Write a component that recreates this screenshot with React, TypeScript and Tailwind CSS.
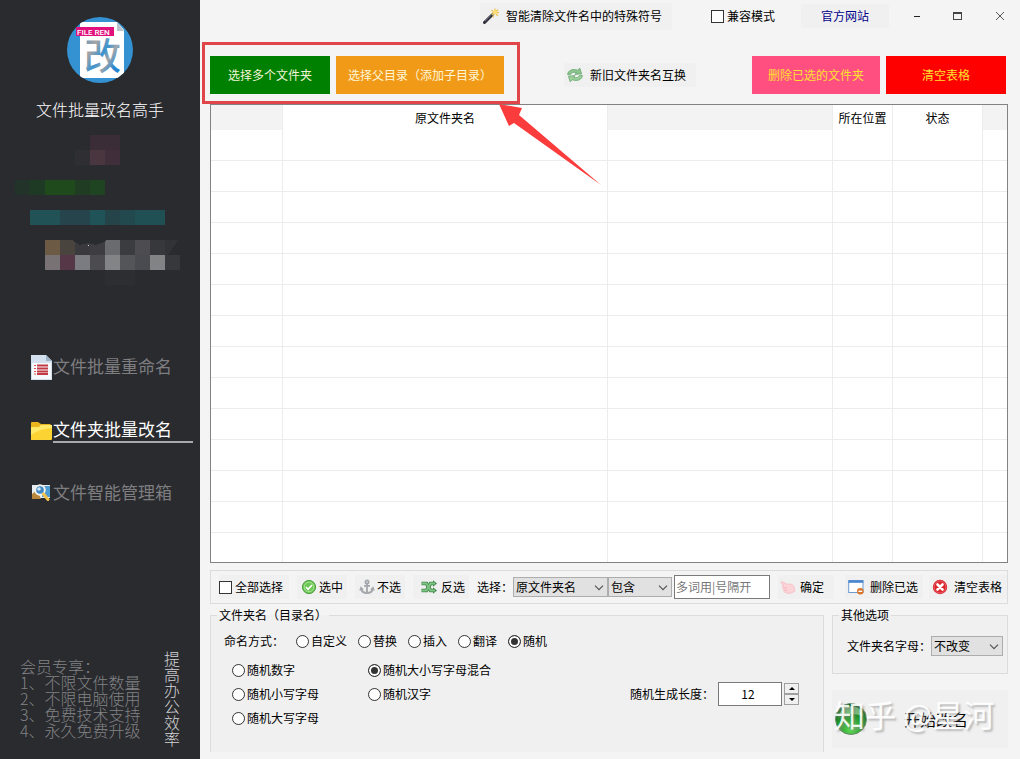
import type { ReactNode } from "react";
import { useState } from "react";

/* ---------- icons ---------- */

function LogoIcon() {
  return (
    <svg viewBox="0 0 66 66" className="size-[66px]" aria-hidden="true">
      <defs>
        <clipPath id="logo-clip">
          <circle cx="33" cy="33" r="33" />
        </clipPath>
        <linearGradient id="logo-ink" x1="0" y1="0" x2="1" y2="1">
          <stop offset="0" stopColor="#2f8fd0" />
          <stop offset="0.3" stopColor="#a9a5a3" />
          <stop offset="0.5" stopColor="#3a93cf" />
          <stop offset="0.62" stopColor="#a3a8ad" />
          <stop offset="0.78" stopColor="#2a88d0" />
          <stop offset="1" stopColor="#1b7fd0" />
        </linearGradient>
      </defs>
      <g clipPath="url(#logo-clip)">
        <rect width="66" height="66" fill="#3492d3" />
        <path d="M13 5H50L57 13V61H13Z" fill="#fff" />
        <path d="M50 5V14H57Z" fill="#b9c3cc" />
        <rect x="9" y="10" width="38" height="9" fill="#e0107c" />
        <text
          x="10"
          y="17.500"
          fontSize="8"
          fontWeight="500"
          fill="#fff"
          fontFamily="Roboto, sans-serif"
        >
          FILE REN
        </text>
        <text
          x="17"
          y="53"
          fontSize="37"
          fontWeight="500"
          fill="url(#logo-ink)"
          fontFamily="Noto Sans CJK SC, sans-serif"
        >
          改
        </text>
      </g>
    </svg>
  );
}

function DocIcon() {
  return (
    <svg viewBox="0 0 21 25" className="h-[25px] w-[21px] shrink-0" aria-hidden="true">
      <path d="M0 0H15L21 6V25H0Z" fill="#d3e1ee" />
      <path d="M1 8H20V24H1Z" fill="#f6f9fc" />
      <path d="M15 0V6H21Z" fill="#9fb4c6" />
      <path d="M3 10.500H5M3 13.500H5M3 16.500H5M3 19H5" stroke="#e05050" strokeWidth="1.200" />
      <path d="M6 10.500H17M6 13.500H17M6 16.500H17M6 19H17" stroke="#c23a44" strokeWidth="1.800" />
    </svg>
  );
}

function FolderIcon() {
  return (
    <svg viewBox="0 0 21 25" className="h-[25px] w-[21px] shrink-0" aria-hidden="true">
      <path d="M0 5Q0 4 1 4H7L10 6H19Q20 6 20 8V22H0Z" fill="#e9b41c" />
      <path d="M0 9H8L10 7H21V21Q21 22 20 22H1Q0 22 0 21Z" fill="#fbd433" />
      <path d="M0 9H8L10 7H21V10Q8 11 0 17Z" fill="#fff07e" opacity="0.750" />
    </svg>
  );
}

function SearchBoxIcon() {
  return (
    <svg viewBox="0 0 21 25" className="h-[25px] w-[21px] shrink-0" aria-hidden="true">
      <path d="M1 4H19V17H1Z" fill="#e6eef5" />
      <path d="M11 5H19V16H11Z" fill="#4f9bd3" />
      <path d="M1 13L6 9L10 18H1Z" fill="#b8873b" />
      <circle cx="9" cy="9" r="4.800" fill="#3d87c4" stroke="#f1f1ea" strokeWidth="2" />
      <circle cx="8" cy="8" r="1.800" fill="#cfe6f8" />
      <path d="M12.500 13L17 18.500" stroke="#f2c14a" strokeWidth="3" strokeLinecap="round" />
    </svg>
  );
}

function WandIcon() {
  return (
    <svg viewBox="0 0 16 16" className="size-4 shrink-0" aria-hidden="true">
      <path d="M1.500 14.500L9 7" stroke="#2b2b33" strokeWidth="3" strokeLinecap="round" />
      <path d="M2 13.200L8.500 6.800" stroke="#8d8fa3" strokeWidth="0.800" />
      <path d="M9 7L11 5" stroke="#c9b36a" strokeWidth="3" />
      <path
        d="M12 0.500V3M8.500 2L10.500 4M15 1.500L13 3.500M13 6L15 8M12.500 4.500H16M10 8L10.500 9.500"
        stroke="#ecc65a"
        strokeWidth="1.300"
      />
      <circle cx="12" cy="4.200" r="2" fill="#ffdf6e" />
    </svg>
  );
}

function SwapIcon() {
  return (
    <svg viewBox="0 0 16 16" className="size-4 shrink-0" aria-hidden="true">
      <path
        d="M0.600 7.600C0.800 3.600 5.500 1.400 10.600 3.200L12.800 1.200L14.600 6.800L8 7.400L9.300 5.700C6.600 4.700 4.400 5.500 3.600 7.600Z"
        fill="#8cc58d"
        stroke="#5c9c64"
        strokeWidth="0.700"
        strokeLinejoin="round"
      />
      <path
        d="M15.400 8.400C15.200 12.400 10.500 14.600 5.400 12.800L3.200 14.800L1.400 9.200L8 8.600L6.700 10.300C9.400 11.300 11.600 10.500 12.400 8.400Z"
        fill="#9bd09a"
        stroke="#5c9c64"
        strokeWidth="0.700"
        strokeLinejoin="round"
      />
    </svg>
  );
}

function CheckIcon() {
  return (
    <svg viewBox="0 0 16 16" className="size-4 shrink-0" aria-hidden="true">
      <circle cx="8" cy="8" r="6.600" fill="#6cc653" stroke="#4d9f42" />
      <circle cx="8" cy="8" r="4.800" fill="none" stroke="#b9eba6" strokeWidth="0.800" />
      <path d="M5 8.200L7.200 10.300L11 6" stroke="#fff" strokeWidth="1.800" fill="none" />
    </svg>
  );
}

function AnchorIcon() {
  return (
    <svg
      viewBox="0 0 16 16"
      className="size-4 shrink-0"
      fill="none"
      stroke="#a3a7ab"
      strokeWidth="1.800"
      aria-hidden="true"
    >
      <circle cx="8" cy="3" r="1.600" />
      <path d="M8 4.600V14M5 6.800H11M2 9.500C2.500 12.500 5 14 8 14S13.500 12.500 14 9.500" />
      <path d="M0.800 11.500L2 8.500L4.200 11M15.200 11.500L14 8.500L11.800 11" strokeWidth="1.200" />
    </svg>
  );
}

function ShuffleIcon() {
  return (
    <svg viewBox="0 0 16 16" className="size-4 shrink-0" fill="none" aria-hidden="true">
      <g stroke="#3f8748" strokeWidth="3.600">
        <path d="M0.500 4.500H5.500L9.500 11.500H12.500" />
        <path d="M0.500 11.500H5.500L9.500 4.500H12.500" />
      </g>
      <path d="M12 1.200L16 4.500L12 7.800ZM12 8.200L16 11.500L12 14.800Z" fill="#3f8748" />
      <g stroke="#7fc485" strokeWidth="1.800">
        <path d="M1 4.500H5.500L9.500 11.500H14" />
        <path d="M1 11.500H5.500L9.500 4.500H14" />
      </g>
    </svg>
  );
}

function HandIcon() {
  return (
    <svg viewBox="0 0 16 16" className="size-4 shrink-0" aria-hidden="true">
      <path
        d="M1 3.500Q1 2 3 3L7.500 5.200L10 5Q13 5 14 7.500L15 12Q12 14.500 8 14.500L4.500 13Q3 12.500 4 11.400L2.800 10.200Q2.200 9.200 3.500 8.800L2 7.600Q2 6.500 4 6.500L1.400 4.500Z"
        fill="#fcd3d7"
        stroke="#f4b9c0"
        strokeWidth="0.700"
      />
      <path d="M4 8.800L7 9M4.300 11.200L7 11.300" stroke="#f0a9b2" strokeWidth="0.700" />
    </svg>
  );
}

function WindowRemoveIcon() {
  return (
    <svg viewBox="0 0 16 16" className="size-4 shrink-0" aria-hidden="true">
      <rect x="0.700" y="1.700" width="14.300" height="11.800" fill="#fff" stroke="#6d9bd0" />
      <rect x="0.500" y="1.200" width="14.800" height="2.600" fill="#4a86cf" />
      <circle cx="12.300" cy="12.300" r="3.300" fill="#d9742e" />
      <path d="M10.400 12.300H14.200" stroke="#fff" strokeWidth="1.400" />
    </svg>
  );
}

function ErrorIcon() {
  return (
    <svg viewBox="0 0 16 16" className="size-4 shrink-0" aria-hidden="true">
      <circle cx="8" cy="8" r="7.200" fill="#d9262f" />
      <circle cx="8" cy="8" r="6" fill="none" stroke="#ee6a70" strokeWidth="0.800" />
      <path d="M5.500 5.500L10.500 10.500M10.500 5.500L5.500 10.500" stroke="#fff" strokeWidth="2.600" strokeLinecap="round" />
    </svg>
  );
}

function StartIcon() {
  return (
    <svg viewBox="0 0 32 32" className="size-8 shrink-0" aria-hidden="true">
      <defs>
        <radialGradient id="start-ball" cx="0.500" cy="0.850" r="0.850">
          <stop offset="0" stopColor="#5fd957" />
          <stop offset="0.500" stopColor="#249a28" />
          <stop offset="1" stopColor="#0b5a14" />
        </radialGradient>
      </defs>
      <circle cx="16" cy="16" r="15.500" fill="url(#start-ball)" stroke="#6b8a6c" />
      <path d="M4 13Q6 3 16 3T28 13Q16 9 4 13Z" fill="#d3f3cf" opacity="0.500" />
    </svg>
  );
}

/* ---------- sidebar ---------- */

type Cell = [x: number, y: number, w: number, h: number, fill: string];

const MOSAIC: Cell[] = [
  [75, 15, 15, 15, "#2f2e33"],
  [90, 0, 30, 15, "#3a2d37"],
  [90, 15, 15, 15, "#49363f"],
  [105, 15, 15, 15, "#402f3a"],
  [15, 45, 15, 15, "#22332a"],
  [30, 45, 15, 15, "#1f3a24"],
  [45, 45, 30, 15, "#1e4a1c"],
  [75, 45, 15, 15, "#203d24"],
  [90, 45, 15, 15, "#1f4421"],
  [30, 75, 30, 15, "#215256"],
  [60, 75, 30, 15, "#25444b"],
  [90, 75, 15, 15, "#205357"],
  [105, 75, 15, 15, "#25444a"],
  [120, 75, 15, 15, "#22494e"],
  [135, 75, 30, 15, "#205053"],
  [45, 105, 15, 15, "#6d5a45"],
  [60, 105, 15, 15, "#4a443e"],
  [75, 105, 15, 15, "#3a3a3e"],
  [90, 105, 15, 15, "#3e3e42"],
  [105, 105, 15, 15, "#6a6b6e"],
  [120, 105, 15, 15, "#3b3c40"],
  [135, 105, 15, 15, "#4c4c51"],
  [150, 105, 15, 15, "#37383c"],
  [45, 120, 15, 15, "#787275"],
  [60, 120, 15, 15, "#553748"],
  [75, 120, 15, 15, "#7b7c81"],
  [90, 120, 15, 15, "#4b4b50"],
  [105, 120, 15, 15, "#838486"],
  [120, 120, 15, 15, "#545559"],
  [135, 120, 15, 15, "#4a4b50"],
  [150, 120, 15, 15, "#828384"],
  [165, 120, 15, 15, "#37383c"],
  [105, 135, 30, 15, "#2d2e32"],
];

function Mosaic() {
  return (
    <svg
      viewBox="0 0 200 150"
      className="h-[150px] w-[200px]"
      shapeRendering="crispEdges"
      aria-hidden="true"
    >
      {MOSAIC.map(([x, y, w, h, fill]) => (
        <rect key={`${x}-${y}`} x={x} y={y} width={w} height={h} fill={fill} />
      ))}
      <path d="M165 105H178L168 120H165Z" fill="#323337" />
      <path d="M72 105H106L104 107L96 110L88 108L80 110Z" fill="#2a2b2f" />
      <rect x="88" y="110" width="1" height="1" fill="#d0d0d0" />
    </svg>
  );
}

type NavItemProps = {
  icon: ReactNode;
  label: string;
  active?: boolean;
};

function NavItem({ icon, label, active }: NavItemProps) {
  return (
    <a href="#" className="flex items-center gap-px">
      {icon}
      <span
        className={`flex-1 border-b-2 text-[17px] leading-6 ${
          active ? "border-[#a9a9ab] text-white" : "border-transparent text-[#7e7e80]"
        }`}
      >
        {label}
      </span>
    </a>
  );
}

function Sidebar() {
  return (
    <aside className="flex w-[200px] shrink-0 flex-col bg-[#2a2b2f] pt-[17px] pb-[13px]">
      <div className="flex flex-col items-center">
        <LogoIcon />
        <h1 className="mt-3.5 text-base leading-6 font-light text-white">文件批量改名高手</h1>
      </div>
      <div className="mt-3.5">
        <Mosaic />
      </div>
      <nav className="mt-[69px] flex flex-col gap-[37px] pr-[7px] pl-[31px]">
        <NavItem icon={<DocIcon />} label="文件批量重命名" />
        <NavItem icon={<FolderIcon />} label="文件夹批量改名" active />
        <NavItem icon={<SearchBoxIcon />} label="文件智能管理箱" />
      </nav>
      <div className="mt-auto flex items-center justify-between pr-5 pl-5 text-base leading-4 font-light">
        <div className="text-[#818284]">
          <p>会员专享：</p>
          <ol>
            <li>1、不限文件数量</li>
            <li>2、不限电脑使用</li>
            <li>3、免费技术支持</li>
            <li>4、永久免费升级</li>
          </ol>
        </div>
        <p className="w-4 break-all text-[#d4d4d6]">提高办公效率</p>
      </div>
    </aside>
  );
}

/* ---------- form controls ---------- */

type SelectProps = {
  label: string;
  value: string;
  className: string;
};

function Select({ label, value, className }: SelectProps) {
  return (
    <span className={`relative inline-flex h-5 shrink-0 ${className}`}>
      <select
        aria-label={label}
        className="h-full w-full appearance-none border border-[#adadad] bg-[#e1e1e1] pl-0.5 leading-4"
      >
        <option>{value}</option>
      </select>
      <svg
        viewBox="0 0 10 6"
        className="pointer-events-none absolute top-2 right-1 h-1.5 w-2.5"
        fill="none"
        stroke="#555"
        aria-hidden="true"
      >
        <path d="M1 0.700L5 4.700L9 0.700" strokeWidth="1.200" />
      </svg>
    </span>
  );
}

type RadioProps = {
  name: string;
  label: string;
  checked: boolean;
  onChange: () => void;
};

function Radio({ name, label, checked, onChange }: RadioProps) {
  return (
    <label className="flex items-center gap-0.5 whitespace-nowrap">
      <input
        type="radio"
        name={name}
        checked={checked}
        onChange={onChange}
        className="size-[13px] shrink-0 appearance-none rounded-full border border-[#333] bg-white checked:bg-[#333] checked:shadow-[inset_0_0_0_2px_white]"
      />
      {label}
    </label>
  );
}

function Checkbox({ label }: { label: string }) {
  return (
    <label className="flex items-center gap-[3px] whitespace-nowrap">
      <input
        type="checkbox"
        className="size-[13px] shrink-0 appearance-none border border-[#333] bg-white checked:bg-[#333]"
      />
      {label}
    </label>
  );
}

type ToolButtonProps = {
  icon: ReactNode;
  label: string;
  className: string;
};

function ToolButton({ icon, label, className }: ToolButtonProps) {
  return (
    <button
      type="button"
      className={`flex h-6 shrink-0 items-center bg-[#f0f0f0] whitespace-nowrap ${className}`}
    >
      {icon}
      {label}
    </button>
  );
}

/* ---------- main area ---------- */

function TitleBar() {
  return (
    <header className="flex h-8 items-center justify-end">
      <button type="button" className="flex h-[27px] w-48 items-center gap-[7px] bg-[#f0f0f0] px-[3px]">
        <WandIcon />
        智能清除文件名中的特殊符号
      </button>
      <div className="ml-[39px]">
        <Checkbox label="兼容模式" />
      </div>
      <a
        href="#"
        className="ml-[26px] flex h-6 w-[88px] items-center justify-center bg-[#f0f0f0] text-[#00008b]"
      >
        官方网站
      </a>
      <div className="ml-2 flex">
        <button type="button" aria-label="最小化" className="flex w-[41px] justify-center">
          <svg viewBox="0 0 12 12" className="size-3" shapeRendering="crispEdges">
            <rect x="2" y="6" width="6" height="1" fill="#222" />
          </svg>
        </button>
        <button type="button" aria-label="最大化" className="flex w-[41px] justify-center">
          <svg viewBox="0 0 12 12" className="size-3" shapeRendering="crispEdges">
            <path d="M0.500 2.500H8.500V9.500H0.500Z" fill="none" stroke="#444" />
            <rect x="0" y="2" width="9" height="2" fill="#444" />
          </svg>
        </button>
        <button type="button" aria-label="关闭" className="flex w-[41px] justify-center">
          <svg viewBox="0 0 12 12" className="size-3">
            <path d="M2 2L10 10M10 2L2 10" stroke="#555" />
          </svg>
        </button>
      </div>
    </header>
  );
}

function Toolbar() {
  return (
    <div className="mt-6 flex h-[38px] items-center pr-3.5 pl-2.5">
      <div className="relative flex h-full gap-1.5">
        <button type="button" className="w-[120px] bg-[#008000] text-[#f4f4d8]">
          选择多个文件夹
        </button>
        <button type="button" className="w-[168px] bg-[#f09a18] text-[#fff6d8]">
          选择父目录（添加子目录）
        </button>
        {/* callout around the two pickers */}
        <div className="pointer-events-none absolute -top-3.5 -right-4 -bottom-2.5 -left-2 z-10 border-[3px] border-[#df4549]" />
        <svg
          viewBox="0 0 102 82"
          className="pointer-events-none absolute top-12 left-[289px] z-10 h-[82px] w-[102px]"
          aria-hidden="true"
        >
          <path d="M0 0L23 4L20 11L102 81L15 19L10 22Z" fill="#fb3c3c" />
        </svg>
      </div>
      <ToolButton
        icon={<SwapIcon />}
        label="新旧文件夹名互换"
        className="ml-[60px] w-[132px] gap-[7px] px-[3px]"
      />
      <div className="ml-auto flex h-full gap-1.5">
        <button type="button" className="w-32 bg-[#ff4f81] text-[#ffe030]">
          删除已选的文件夹
        </button>
        <button type="button" className="w-[120px] bg-[#fe0000] text-[#ffe030]">
          清空表格
        </button>
      </div>
    </div>
  );
}

const COLUMNS = ["", "原文件夹名", "", "所在位置", "状态", ""];
const ROW_COUNT = 14;

function FileTable() {
  return (
    <div className="mt-2.5 mr-3 ml-2.5 min-h-[200px] flex-1 basis-0 overflow-hidden border border-[#828282] bg-white">
      <table className="w-full table-fixed border-separate border-spacing-0">
        <colgroup>
          <col className="w-[72px]" />
          <col className="w-[325px]" />
          <col />
          <col className="w-[60px]" />
          <col className="w-[90px]" />
          <col className="w-6" />
        </colgroup>
        <thead>
          <tr className="h-[25px]">
            {COLUMNS.map((name, i) => (
              <th
                key={i}
                className={`border-r border-[#ececec] p-0 font-normal last:border-r-0 ${
                  name ? "bg-white" : "bg-[#f3f3f3]"
                }`}
              >
                {name}
              </th>
            ))}
          </tr>
        </thead>
        <tbody>
          {Array.from({ length: ROW_COUNT }, (_, row) => (
            <tr key={row} className="h-[31px]">
              {COLUMNS.map((_, i) => (
                <td key={i} className="border-r border-b border-[#ececec] p-0 last:border-r-0" />
              ))}
            </tr>
          ))}
        </tbody>
      </table>
    </div>
  );
}

function SelectionBar() {
  return (
    <div className="mt-[7px] mr-3 ml-2.5 flex h-[34px] items-center border border-[#dcdcdc] pl-2">
      <div className="flex items-center gap-2">
        <div className="w-[70px] bg-[#f0f0f0] py-1">
          <Checkbox label="全部选择" />
        </div>
        <ToolButton icon={<CheckIcon />} label="选中" className="w-[50px] gap-0.5 px-1" />
        <ToolButton icon={<AnchorIcon />} label="不选" className="w-[50px] gap-0.5 px-1" />
        <ToolButton icon={<ShuffleIcon />} label="反选" className="w-14 gap-1 px-2" />
        <div className="flex items-center">
          <span className="w-9 whitespace-nowrap">选择：</span>
          <Select label="选择列" value="原文件夹名" className="w-[95px]" />
          <Select label="条件" value="包含" className="w-16" />
          <input
            type="text"
            aria-label="关键词"
            placeholder="多词用|号隔开"
            className="ml-0.5 h-6 w-24 border border-[#7a7a7a] bg-white px-px pb-0.5 placeholder:text-[#777]"
          />
        </div>
        <ToolButton icon={<HandIcon />} label="确定" className="w-14 gap-1 px-0.5" />
      </div>
      <div className="ml-auto flex items-center gap-1.5">
        <ToolButton icon={<WindowRemoveIcon />} label="删除已选" className="w-[78px] gap-1.5 px-[3px]" />
        <ToolButton icon={<ErrorIcon />} label="清空表格" className="w-[78px] gap-1.5 px-[3px]" />
      </div>
    </div>
  );
}

const MODES = ["自定义", "替换", "插入", "翻译", "随机"];
const RANDOM_KINDS = ["随机数字", "随机大小写字母混合", "随机小写字母", "随机汉字", "随机大写字母"];

function NamingPanel() {
  const [mode, setMode] = useState("随机");
  const [kind, setKind] = useState("随机大小写字母混合");
  const [length, setLength] = useState(12);

  return (
    <fieldset className="min-w-0 flex-1 border border-b-0 border-[#dcdcdc] bg-[#f0f0f0]">
      <legend className="ml-1.5 px-0.5 leading-[18px]">文件夹名（目录名）</legend>
      <div className="mt-2 flex h-[18px] items-center pl-[13px]">
        <span className="w-[72px]">命名方式：</span>
        <div className="flex gap-[11px]">
          {MODES.map((m) => (
            <Radio key={m} name="mode" label={m} checked={mode === m} onChange={() => setMode(m)} />
          ))}
        </div>
      </div>
      <div className="mt-2 flex items-center justify-between pr-6 pl-[21px]">
        <div className="grid grid-cols-[136px_auto] auto-rows-[24px]">
          {RANDOM_KINDS.map((k) => (
            <Radio key={k} name="kind" label={k} checked={kind === k} onChange={() => setKind(k)} />
          ))}
        </div>
        <div className="flex items-center">
          <label htmlFor="random-length" className="w-[88px]">
            随机生成长度：
          </label>
          <input
            id="random-length"
            type="text"
            value={length}
            onChange={(e) => setLength(Number(e.target.value) || 0)}
            className="h-6 w-16 border border-[#7a7a7a] bg-white pr-1 pb-0.5 text-center"
          />
          <div className="ml-0.5 flex w-[15px] flex-col">
            <button
              type="button"
              aria-label="增加"
              onClick={() => setLength(length + 1)}
              className="flex h-[11px] items-center justify-center border border-[#a0a0a0] bg-[#f0f0f0]"
            >
              <svg viewBox="0 0 6 3" className="h-[3px] w-1.5">
                <path d="M3 0L6 3H0Z" />
              </svg>
            </button>
            <button
              type="button"
              aria-label="减少"
              onClick={() => setLength(length - 1)}
              className="flex h-[11px] items-center justify-center border border-[#a0a0a0] bg-[#f0f0f0]"
            >
              <svg viewBox="0 0 6 3" className="h-[3px] w-1.5">
                <path d="M0 0H6L3 3Z" />
              </svg>
            </button>
          </div>
        </div>
      </div>
    </fieldset>
  );
}

function OptionsPanel() {
  return (
    <div className="flex w-44 shrink-0 flex-col gap-4">
      <fieldset className="h-[68px] border border-[#dcdcdc] bg-[#f0f0f0]">
        <legend className="ml-1.5 px-0.5 leading-[18px]">其他选项</legend>
        <div className="mt-3 flex items-center justify-between pr-1 pl-3.5">
          <span>文件夹名字母：</span>
          <Select label="文件夹名字母" value="不改变" className="w-[72px]" />
        </div>
      </fieldset>
      <div className="relative">
        <button
          type="button"
          className="flex h-[58px] w-full items-center gap-[37px] bg-[#f0f0f0] px-[3px] text-base"
        >
          <StartIcon />
          开始改名
        </button>
        <p className="pointer-events-none absolute top-1.5 left-0.5 text-[31px] leading-9 whitespace-nowrap text-white/90 [text-shadow:2px_2px_2px_#8888]">
          知乎 @星河
        </p>
      </div>
    </div>
  );
}

export default function App() {
  return (
    <div className="flex min-h-screen bg-[#f4f4f4] font-['Noto_Sans_CJK_SC',sans-serif] text-xs leading-4 text-black">
      <Sidebar />
      <main className="flex min-w-0 flex-1 flex-col">
        <TitleBar />
        <Toolbar />
        <FileTable />
        <SelectionBar />
        <div className="mt-0.5 mr-3 mb-[7px] ml-2.5 flex h-[146px] gap-2">
          <NamingPanel />
          <OptionsPanel />
        </div>
      </main>
    </div>
  );
}
